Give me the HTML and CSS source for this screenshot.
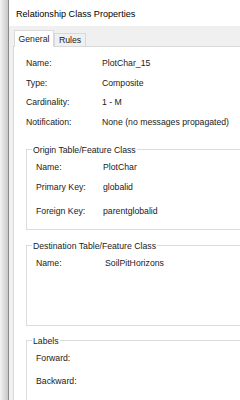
FILE: index.html
```html
<!DOCTYPE html>
<html lang="en">
<head>
    <meta charset="UTF-8">
    <meta name="viewport" content="width=device-width, initial-scale=1.0">
    <title>Relationship Class Properties</title>
    <link rel="stylesheet" href="styles.css">
</head>
<body>
    <div class="dialog">
        <div class="title-bar">Relationship Class Properties</div>

        <div class="tabs">
            <div class="tab active">General</div>
            <div class="tab">Rules</div>
        </div>

        <div class="tab-panel">
            <div class="props">
                <div class="row"><span class="label">Name:</span><span>PlotChar_15</span></div>
                <div class="row"><span class="label">Type:</span><span>Composite</span></div>
                <div class="row"><span class="label">Cardinality:</span><span>1 - M</span></div>
                <div class="row"><span class="label">Notification:</span><span>None (no messages propagated)</span></div>
            </div>

            <fieldset class="group origin">
                <legend>Origin Table/Feature Class</legend>
                <div class="row"><span class="label">Name:</span><span>PlotChar</span></div>
                <div class="row"><span class="label">Primary Key:</span><span>globalid</span></div>
                <div class="row spaced"><span class="label">Foreign Key:</span><span>parentglobalid</span></div>
            </fieldset>

            <fieldset class="group destination">
                <legend>Destination Table/Feature Class</legend>
                <div class="row"><span class="label">Name:</span><span>SoilPitHorizons</span></div>
            </fieldset>

            <fieldset class="group labels">
                <legend>Labels</legend>
                <div class="row"><span class="label">Forward:</span><span></span></div>
                <div class="row spaced"><span class="label">Backward:</span><span></span></div>
            </fieldset>
        </div>
    </div>
</body>
</html>
```

FILE: styles.css
```css
* {
    margin: 0;
    padding: 0;
    box-sizing: border-box;
}

body {
    width: 240px;
    height: 400px;
    overflow: hidden;
    background: linear-gradient(to right, #f4f4f4 0px, #c8c8c8 8px);
    font-family: 'Liberation Sans', Arial, sans-serif;
    font-size: 8.7px;
    color: #1a1a1a;
}

.dialog {
    margin-left: 8px;
    width: 320px;
    height: 400px;
    background: #f0f0f0;
    border-left: 1px solid #8a8a8a;
}

.title-bar {
    height: 26px;
    background: #ffffff;
    padding-left: 7px;
    line-height: 28px;
    font-size: 9.1px;
    color: #000;
}

.tabs {
    display: flex;
    align-items: flex-end;
    height: 20px;
    padding-left: 5px;
}

.tab {
    width: 32px;
    height: 13px;
    line-height: 12px;
    text-align: center;
    background: #f0f0f0;
    border: 1px solid #d9d9d9;
    border-bottom: none;
}

.tab.active {
    width: 40px;
    height: 17px;
    line-height: 16px;
    background: #ffffff;
    margin-bottom: -1px;
    position: relative;
    z-index: 1;
}

.tab-panel {
    margin-left: 4px;
    height: 360px;
    background: #ffffff;
    border: 1px solid #d9d9d9;
    padding: 7px 0 0 12px;
}

.row {
    display: grid;
    grid-template-columns: 76px 1fr;
    height: 20px;
    line-height: 20px;
    white-space: nowrap;
}

.props .row {
    height: 19.7px;
    line-height: 19.7px;
}

.group {
    border: 1px solid #dcdcdc;
    padding: 0 0 0 9px;
    margin-top: 10px;
}

.group legend {
    margin-left: -4px;
    padding: 0 1px;
    line-height: 14px;
}

.group .row {
    grid-template-columns: 67px 1fr;
}

.group .row.spaced {
    margin-top: 4px;
}

.origin {
    height: 87px;
}

.destination {
    height: 87px;
    margin-top: 9px;
}

.destination .row {
    grid-template-columns: 69px 1fr;
}

.labels {
    height: 90px;
    margin-top: 8px;
}

.labels .row.spaced {
    margin-top: 3px;
}
```
